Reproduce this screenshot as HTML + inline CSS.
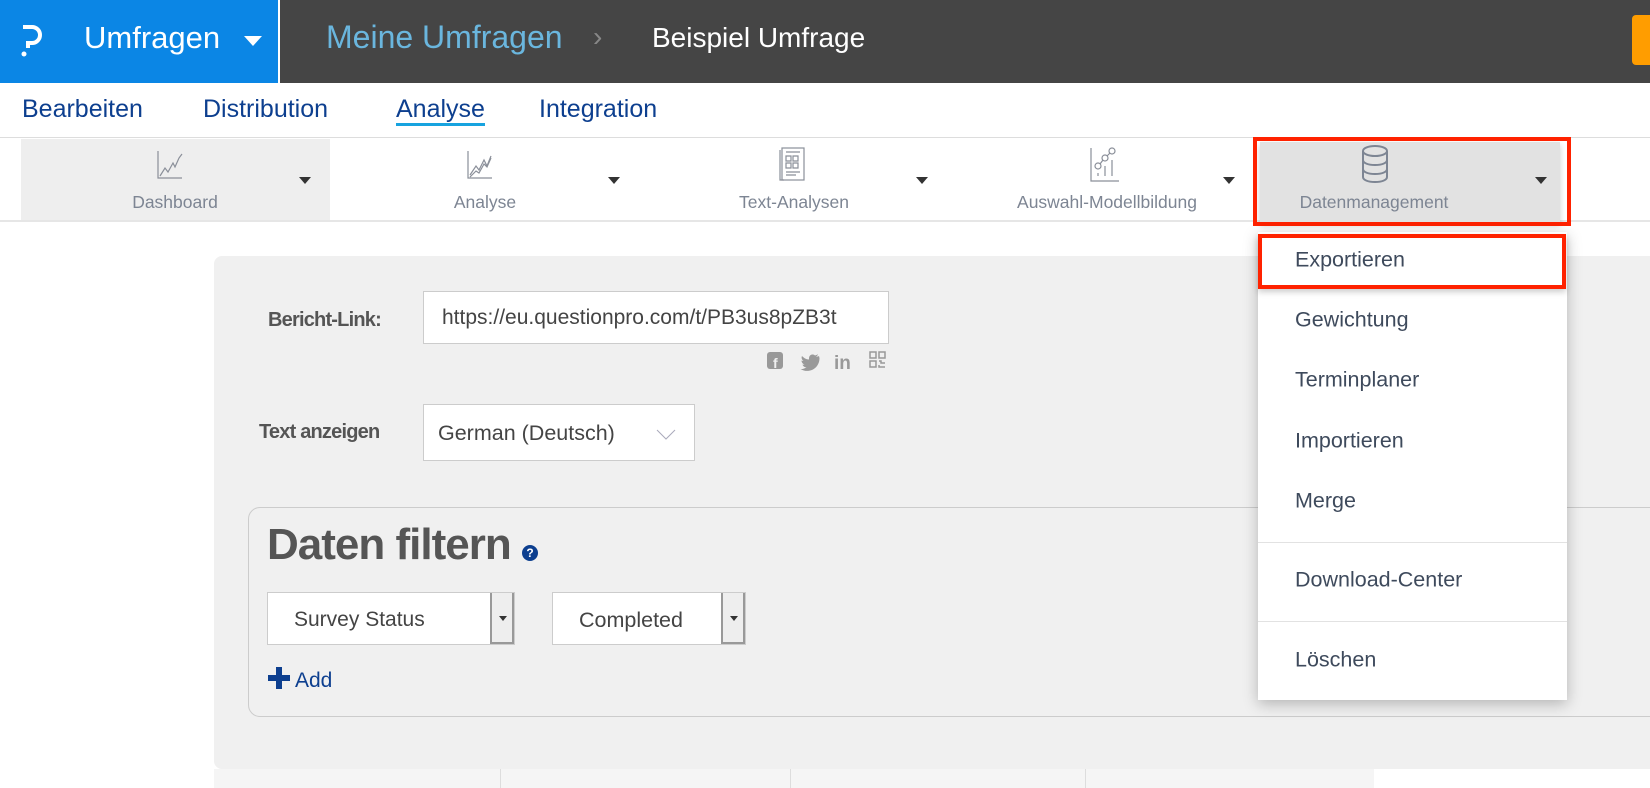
<!DOCTYPE html>
<html><head><meta charset="utf-8"><style>
*{margin:0;padding:0;box-sizing:border-box}
body{width:1650px;height:788px;overflow:hidden;background:#fff;font-family:"Liberation Sans",sans-serif;position:relative}
.a{position:absolute;white-space:nowrap}
.tri{position:absolute;width:0;height:0;border-left:6px solid transparent;border-right:6px solid transparent;border-top:7px solid #333}
.lbl{position:absolute;top:192px;font-size:17.5px;color:#7d8593;transform:translateX(-50%);white-space:nowrap}
.mi{position:absolute;left:1295px;font-size:21.5px;color:#3e4a5c;transform:translateY(-50%)}
</style></head><body>
<!-- top bar -->
<div class="a" style="left:0;top:0;width:1650px;height:83px;background:#454545"></div>
<div class="a" style="left:0;top:0;width:278px;height:83px;background:#0b86e5"></div>
<div class="a" style="left:278px;top:0;width:2px;height:83px;background:#fff"></div>
<svg class="a" style="left:20px;top:24px" width="26" height="34" viewBox="0 0 26 34"><path d="M3 3h9a8 8 0 0 1 0 16h-4v5" fill="none" stroke="#fff" stroke-width="4"/><circle cx="4" cy="30" r="2.5" fill="#fff"/></svg>
<div class="a" style="left:84px;top:20px;font-size:31px;color:#fff">Umfragen</div>
<div class="tri" style="left:244px;top:36px;border-left-width:9px;border-right-width:9px;border-top:10px solid #fff"></div>
<div class="a" style="left:326px;top:19px;font-size:32px;color:#6ab6de">Meine Umfragen</div>
<div class="a" style="left:593px;top:21px;font-size:28px;color:#888">›</div>
<div class="a" style="left:652px;top:22px;font-size:28px;color:#fff">Beispiel Umfrage</div>
<div class="a" style="left:1632px;top:15px;width:30px;height:50px;background:#ff9d00;border-radius:4px"></div>
<!-- nav -->
<div class="a" style="left:22px;top:95px;font-size:25px;color:#0d3f8f">Bearbeiten</div>
<div class="a" style="left:203px;top:95px;font-size:25px;color:#0d3f8f">Distribution</div>
<div class="a" style="left:396px;top:95px;font-size:25px;color:#0d3f8f">Analyse</div>
<div class="a" style="left:396px;top:123px;width:89px;height:3px;background:#17a3df"></div>
<div class="a" style="left:539px;top:95px;font-size:25px;color:#0d3f8f">Integration</div>
<div class="a" style="left:0;top:137px;width:1650px;height:1px;background:#ddd"></div>
<!-- toolbar -->
<div class="a" style="left:0;top:220px;width:1650px;height:2px;background:#e6e6e6"></div>
<div class="a" style="left:21px;top:139px;width:309px;height:81px;background:#eeeeee"></div>
<div class="a" style="left:1260px;top:142px;width:300px;height:80px;background:#e2e2e2;box-shadow:0 3px 6px rgba(0,0,0,.2)"></div>
<div class="a" style="left:1253px;top:137px;width:318px;height:89px;border:4px solid #ff2200"></div>
<svg class="a" style="left:155px;top:150px" width="40" height="32" fill="none" stroke="#8a8f99" stroke-width="1.2"><path d="M3 1v27h24M5 26l5-8 3 4 5-9 2 4 4-9 3-4"/></svg>
<svg class="a" style="left:465px;top:150px" width="40" height="32" fill="none" stroke="#8a8f99" stroke-width="1.2"><path d="M3 1v27h24M5 25l6-9 3 4 5-10 3 6 4-10M5 27l6-6 3 2 5-9 3 3 4-9"/></svg>
<svg class="a" style="left:777px;top:146px" width="34" height="38" fill="none" stroke="#8a8f99" stroke-width="1.2"><rect x="5" y="2" width="22" height="32"/><path d="M3 4v30h4M9 6h14M9 10h5v5H9zM16 10h5v5h-5zM9 17h5v5H9zM16 17h5v5h-5zM9 26h14M9 29h10"/></svg>
<svg class="a" style="left:1088px;top:146px" width="38" height="38" fill="none" stroke="#8a8f99" stroke-width="1.2"><path d="M3 2v33h28"/><circle cx="10" cy="20" r="3"/><circle cx="17" cy="12" r="3"/><circle cx="24" cy="5" r="3"/><path d="M12 18l3-4M19 10l3-3M10 27v3M17 20v10M24 14v16"/></svg>
<svg class="a" style="left:1358px;top:143px" width="34" height="44" fill="none" stroke="#7d8593" stroke-width="2"><ellipse cx="17" cy="8" rx="12" ry="5"/><path d="M5 8v26c0 3 5 5 12 5s12-2 12-5V8M5 17c0 3 5 5 12 5s12-2 12-5M5 26c0 3 5 5 12 5s12-2 12-5"/></svg>
<div class="lbl" style="left:175px">Dashboard</div>
<div class="lbl" style="left:485px">Analyse</div>
<div class="lbl" style="left:794px">Text-Analysen</div>
<div class="lbl" style="left:1107px">Auswahl-Modellbildung</div>
<div class="lbl" style="left:1374px">Datenmanagement</div>
<div class="tri" style="left:299px;top:177px"></div>
<div class="tri" style="left:608px;top:177px"></div>
<div class="tri" style="left:916px;top:177px"></div>
<div class="tri" style="left:1223px;top:177px"></div>
<div class="tri" style="left:1535px;top:177px"></div>
<!-- content -->
<div class="a" style="left:214px;top:256px;width:1450px;height:513px;background:#f0f0f0;border-radius:8px"></div>
<div class="a" style="left:214px;top:769px;width:1160px;height:19px;background:#f5f5f5"></div>
<div class="a" style="left:500px;top:769px;width:1px;height:19px;background:#ddd"></div>
<div class="a" style="left:790px;top:769px;width:1px;height:19px;background:#ddd"></div>
<div class="a" style="left:1085px;top:769px;width:1px;height:19px;background:#ddd"></div>
<div class="a" style="left:268px;top:309px;font-size:20px;font-weight:bold;color:#555;letter-spacing:-0.8px">Bericht-Link:</div>
<div class="a" style="left:423px;top:291px;width:466px;height:53px;background:#fff;border:1px solid #ccc;overflow:hidden"><span style="position:absolute;left:18px;top:14px;font-size:21px;color:#444;white-space:nowrap">https://eu.questionpro.com/t/PB3us8pZB3t</span></div>
<svg class="a" style="left:766px;top:350px" width="124" height="22"><rect x="1" y="2" width="16" height="17" rx="3" fill="#999"/><text x="7" y="18" font-family="Liberation Sans" font-weight="bold" font-size="14" fill="#f0f0f0">f</text><path d="M53 6c-1 .5-2 .7-3 .8 1-.6 1.7-1.5 2-2.5-1 .6-2 1-3 1.2-2-2-6-1-6 3v1c-3 0-5-1.5-7-3.5-1 2 0 4 1.5 5-.7 0-1.3-.2-2-.5 0 2 1.5 3.5 3 4-.6.2-1.3.2-2 .1.6 1.6 2 2.7 4 2.7-2 1.4-4 2-6 1.8 9 5 19-1 19-11z" fill="#999"/><text x="68" y="19" font-family="Liberation Sans" font-weight="bold" font-size="19" fill="#999">in</text><g fill="none" stroke="#999" stroke-width="1.5"><rect x="104" y="2" width="6" height="6"/><rect x="113" y="2" width="6" height="6"/><rect x="104" y="11" width="6" height="6"/><path d="M113 11h2v2h4M113 15v2h6"/></g></svg>
<div class="a" style="left:259px;top:421px;font-size:20px;font-weight:bold;color:#555;letter-spacing:-0.8px">Text anzeigen</div>
<div class="a" style="left:423px;top:404px;width:272px;height:57px;background:#fff;border:1px solid #ccc"><span style="position:absolute;left:14px;top:16px;font-size:21.5px;color:#444">German (Deutsch)</span><svg style="position:absolute;left:232px;top:24px" width="20" height="12"><path d="M1 1l9 9 9-9" fill="none" stroke="#aab" stroke-width="1"/></svg></div>
<div class="a" style="left:248px;top:507px;width:1450px;height:210px;border:1px solid #ccc;border-radius:12px"></div>
<div class="a" style="left:267px;top:520px;font-size:44px;font-weight:bold;color:#555;letter-spacing:-1px">Daten filtern</div>
<div class="a" style="left:522px;top:545px;width:16px;height:16px;border-radius:50%;background:#0d3f8f;color:#fff;font-size:12px;font-weight:bold;text-align:center;line-height:16px">?</div>
<div class="a" style="left:267px;top:592px;width:248px;height:53px;background:#fff;border:1px solid #ccc"><span style="position:absolute;left:26px;top:15px;font-size:21px;color:#444">Survey Status</span><div style="position:absolute;right:0;top:0;width:24px;height:51px;background:#eee;border-left:2px solid #999;border-right:2px solid #999;border-bottom:2px solid #999"></div><div class="tri" style="right:7px;top:23px;border-left-width:4px;border-right-width:4px;border-top-width:5px"></div></div>
<div class="a" style="left:552px;top:592px;width:194px;height:53px;background:#fff;border:1px solid #ccc"><span style="position:absolute;left:26px;top:15px;font-size:21.5px;color:#444">Completed</span><div style="position:absolute;right:0;top:0;width:24px;height:51px;background:#eee;border-left:2px solid #999;border-right:2px solid #999;border-bottom:2px solid #999"></div><div class="tri" style="right:7px;top:23px;border-left-width:4px;border-right-width:4px;border-top-width:5px"></div></div>
<div class="a" style="left:268px;top:675px;width:22px;height:6px;background:#0d3f8f"></div>
<div class="a" style="left:276px;top:667px;width:6px;height:22px;background:#0d3f8f"></div>
<div class="a" style="left:295px;top:669px;font-size:21px;color:#0d3f8f">Add</div>
<!-- dropdown menu -->
<div class="a" style="left:1258px;top:232px;width:309px;height:468px;background:#fff;box-shadow:0 4px 14px rgba(0,0,0,.25)"></div>
<div class="a" style="left:1258px;top:542px;width:309px;height:1px;background:#e2e2e2"></div>
<div class="a" style="left:1258px;top:621px;width:309px;height:1px;background:#e2e2e2"></div>
<div class="a" style="left:1258px;top:234px;width:308px;height:55px;border:4px solid #ff2200;box-shadow:0 3px 6px rgba(0,0,0,.2)"></div>
<div class="mi" style="top:260px">Exportieren</div>
<div class="mi" style="top:320px">Gewichtung</div>
<div class="mi" style="top:380px">Terminplaner</div>
<div class="mi" style="top:441px">Importieren</div>
<div class="mi" style="top:501px">Merge</div>
<div class="mi" style="top:580px">Download-Center</div>
<div class="mi" style="top:660px">Löschen</div>
</body></html>
